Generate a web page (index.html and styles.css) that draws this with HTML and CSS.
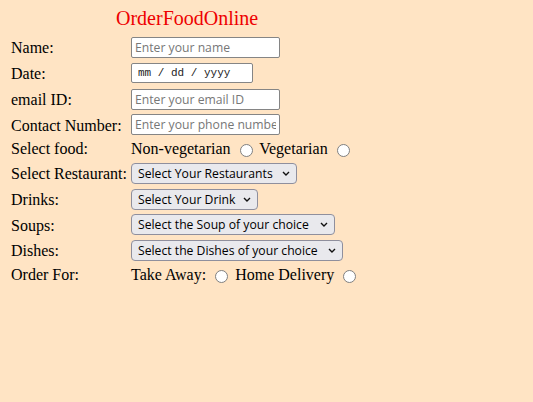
FILE: index.html
```html
<!DOCTYPE html>
<html lang="en">
<head>
<meta charset="utf-8">
<title>OrderFoodOnline</title>
<link rel="stylesheet" href="styles.css">
</head>
<body>
<form class="order-form">
  <div class="title">OrderFoodOnline</div>

  <label class="lbl lbl-ctrl" for="name">Name:</label>
  <div class="field"><input class="text w-name" id="name" type="text" placeholder="Enter your name"></div>

  <label class="lbl lbl-ctrl" for="date">Date:</label>
  <div class="field field-top"><input class="text date" id="date" type="text" placeholder="mm / dd / yyyy"></div>

  <label class="lbl lbl-ctrl" for="email">email ID:</label>
  <div class="field"><input class="text w-name" id="email" type="text" placeholder="Enter your email ID"></div>

  <label class="lbl lbl-ctrl" for="phone">Contact Number:</label>
  <div class="field"><input class="text w-name" id="phone" type="text" placeholder="Enter your phone number"></div>

  <span class="lbl">Select food:</span>
  <div class="radios">Non-vegetarian <input class="radio" type="radio" name="food"> Vegetarian <input class="radio" type="radio" name="food"></div>

  <label class="lbl lbl-ctrl" for="rest">Select Restaurant:</label>
  <div class="field"><span class="sel-wrap w-rest"><select id="rest" class="sel"><option>Select Your Restaurants</option></select><svg class="chev" viewBox="0 0 8 5" width="8" height="5"><path d="M1 1l3 3 3-3" fill="none" stroke="#111" stroke-width="1.4"/></svg></span></div>

  <label class="lbl lbl-ctrl" for="drink">Drinks:</label>
  <div class="field"><span class="sel-wrap w-drink"><select id="drink" class="sel"><option>Select Your Drink</option></select><svg class="chev" viewBox="0 0 8 5" width="8" height="5"><path d="M1 1l3 3 3-3" fill="none" stroke="#111" stroke-width="1.4"/></svg></span></div>

  <label class="lbl lbl-ctrl" for="soup">Soups:</label>
  <div class="field"><span class="sel-wrap w-soup"><select id="soup" class="sel"><option>Select the Soup of your choice</option></select><svg class="chev" viewBox="0 0 8 5" width="8" height="5"><path d="M1 1l3 3 3-3" fill="none" stroke="#111" stroke-width="1.4"/></svg></span></div>

  <label class="lbl lbl-ctrl" for="dish">Dishes:</label>
  <div class="field"><span class="sel-wrap w-dish"><select id="dish" class="sel"><option>Select the Dishes of your choice</option></select><svg class="chev" viewBox="0 0 8 5" width="8" height="5"><path d="M1 1l3 3 3-3" fill="none" stroke="#111" stroke-width="1.4"/></svg></span></div>

  <span class="lbl">Order For:</span>
  <div class="radios">Take Away: <input class="radio" type="radio" name="order"> Home Delivery <input class="radio" type="radio" name="order"></div>
</form>
</body>
</html>
```
FILE: styles.css
```css
html, body {
  background: #ffe4c4;
}
body {
  margin: 7px 8px;
  font-family: "Liberation Serif", "Times New Roman", serif;
  font-size: 16px;
  color: #000;
}
.order-form {
  display: inline-grid;
  grid-template-columns: 120px auto;
  row-gap: 4.75px;
  align-items: center;
  padding-left: 3px;
}
.title {
  grid-column: 1 / -1;
  text-align: center;
  color: #ee0000;
  font-size: 20px;
  padding-left: 4px;
  margin-bottom: 2.3px;
}
.lbl {
  white-space: nowrap;
}
.lbl-ctrl {
  align-self: start;
  padding-top: 2.4px;
}
.field {
  display: flex;
  align-items: center;
  min-height: 21px;
  white-space: nowrap;
}
.field-top {
  align-items: flex-start;
}
.text {
  box-sizing: border-box;
  height: 21px;
  margin: 0;
  border: 1px solid #858585;
  border-radius: 2px;
  background: #fff;
  padding: 1px 3px;
  font-family: "Open Sans", "Noto Sans", sans-serif;
  font-size: 12.2px;
  color: #000;
  outline: none;
}
.text::placeholder {
  color: #777;
}
.w-name {
  width: 149px;
}
.date {
  width: 122px;
  height: 20px;
  padding-left: 6px;
  font-family: "Liberation Mono", "Courier New", monospace;
  font-size: 11px;
}
.date::placeholder {
  color: #222;
}
.radios {
  white-space: nowrap;
}
.radio {
  appearance: none;
  -webkit-appearance: none;
  box-sizing: border-box;
  width: 13px;
  height: 13px;
  margin: 3px 3px 0 5px;
  border: 1.5px solid #808080;
  border-radius: 50%;
  background: #fff;
  vertical-align: -3px;
}
.sel-wrap {
  position: relative;
  display: inline-block;
}
.sel {
  appearance: none;
  -webkit-appearance: none;
  box-sizing: border-box;
  width: 100%;
  height: 21px;
  margin: 0;
  padding: 0 20px 0 6px;
  border: 1px solid #8f8f9d;
  border-radius: 4px;
  background: #e9e9ed;
  font-family: "Open Sans", "Noto Sans", sans-serif;
  font-size: 12.2px;
  color: #000;
}
.chev {
  position: absolute;
  right: 7px;
  top: 8px;
  pointer-events: none;
}
.w-rest { width: 166px; }
.w-drink { width: 127px; }
.w-soup { width: 204px; }
.w-dish { width: 212px; }
```
